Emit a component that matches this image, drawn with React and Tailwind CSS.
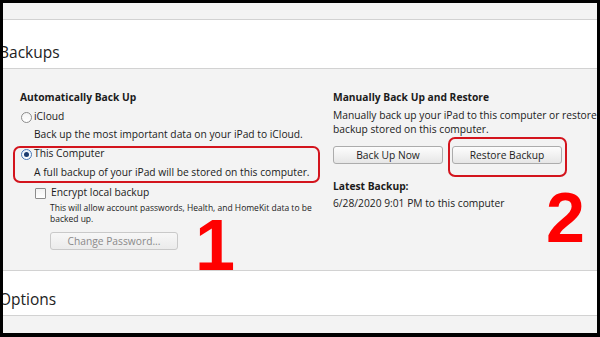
export default function App() {
  const btn =
    "flex items-center justify-center h-[18px] rounded-[3px] border border-[#acacac] bg-gradient-to-b from-[#fdfdfd] to-[#e6e6e6] text-[10.25px] text-[#1e1e1e] leading-none";
  return (
    <div className="relative w-[600px] h-[337px] bg-black pt-[3px] pl-[3px] pr-[3px] pb-[4px] font-['Open_Sans','Segoe_UI',sans-serif] text-[#1b1b1b]">
      <div className="flex flex-col h-full bg-[#f3f3f3] overflow-hidden">
        <div className="h-[17px] shrink-0 border-b border-[#d2d2d2]" />
        <div className="h-[49px] shrink-0 bg-white border-b border-[#d2d2d2] pt-[21px]">
          <div className="ml-[-4px] text-[15.5px] leading-[22px] text-[#222]">Backups</div>
        </div>
        <div className="h-[202px] shrink-0 border-b border-[#d2d2d2] flex pt-[20px] text-[10.25px]">
          {/* Left column */}
          <div className="w-[330px] shrink-0 pl-[17px] flex flex-col">
            <div className="font-bold leading-[16px]">Automatically Back Up</div>
            <div className="mt-[4px] flex items-center h-[16px]">
              <span className="ml-[1px] w-[11px] h-[11px] rounded-full border border-[#8c8c8c] bg-gradient-to-b from-[#f4f4f4] to-white" />
              <span className="ml-[2px]">iCloud</span>
            </div>
            <div className="mt-[1px] pl-[14px] leading-[16px] whitespace-nowrap">
              Back up the most important data on your iPad to iCloud.
            </div>
            <div className="mt-[4px] flex items-center h-[16px]">
              <span className="ml-[1px] w-[11px] h-[11px] rounded-full border border-[#4a78b8] bg-gradient-to-b from-[#e9f1fb] to-white flex items-center justify-center">
                <span className="w-[5px] h-[5px] rounded-full bg-[#1c3c70]" />
              </span>
              <span className="ml-[2px]">This Computer</span>
            </div>
            <div className="mt-[2px] pl-[14px] leading-[16px] whitespace-nowrap">
              A full backup of your iPad will be stored on this computer.
            </div>
            <div className="mt-[5px] flex items-center h-[16px]">
              <span className="ml-[15px] w-[11px] h-[11px] rounded-[1px] border border-[#8c8c8c] bg-gradient-to-b from-[#f2f2f2] to-white" />
              <span className="ml-[5px]">Encrypt local backup</span>
            </div>
            <div className="mt-[1px] pl-[30px] text-[8.5px] leading-[11px] w-[300px]">
              This will allow account passwords, Health, and HomeKit data to be backed up.
            </div>
            <div className="mt-[8px] ml-[30px] w-[128px] h-[18px] rounded-[3px] border border-[#c9c9c9] bg-gradient-to-b from-[#f7f7f7] to-[#ebebeb] flex items-center justify-center text-[10.25px] text-[#8a8a8a] leading-none">
              Change Password...
            </div>
          </div>
          {/* Right column */}
          <div className="flex-1 flex flex-col">
            <div className="font-bold leading-[16px]">Manually Back Up and Restore</div>
            <div className="mt-[3px] leading-[14px] whitespace-nowrap">
              Manually back up your iPad to this computer or restore
              <br />
              backup stored on this computer.
            </div>
            <div className="mt-[10px] flex gap-[9px]">
              <div className={btn + " w-[110px]"}>Back Up Now</div>
              <div className={btn + " w-[110px]"}>Restore Backup</div>
            </div>
            <div className="mt-[14px] font-bold leading-[16px]">Latest Backup:</div>
            <div className="mt-[1px] leading-[16px]">6/28/2020 9:01 PM to this computer</div>
          </div>
        </div>
        <div className="h-[45px] shrink-0 bg-white border-b border-[#d2d2d2] pt-[17px]">
          <div className="ml-[-4px] text-[15.5px] leading-[22px] text-[#222]">Options</div>
        </div>
        <div className="flex-1" />
      </div>

      {/* Annotations */}
      <div className="absolute left-[13px] top-[146px] w-[307px] h-[37px] rounded-[7px] border-2 border-[#d3141d]" />
      <div className="absolute left-[448px] top-[137px] w-[119px] h-[40px] rounded-[7px] border-2 border-[#d3141d]" />
      <div className="absolute left-[195px] top-[209px] text-[72px] leading-none font-bold text-[#ff0000] font-['Liberation_Sans',Arial,sans-serif]">
        1
      </div>
      <div className="absolute left-[546px] top-[183px] text-[70px] leading-none font-bold text-[#ff0000] font-['Liberation_Sans',Arial,sans-serif]">
        2
      </div>
    </div>
  );
}
